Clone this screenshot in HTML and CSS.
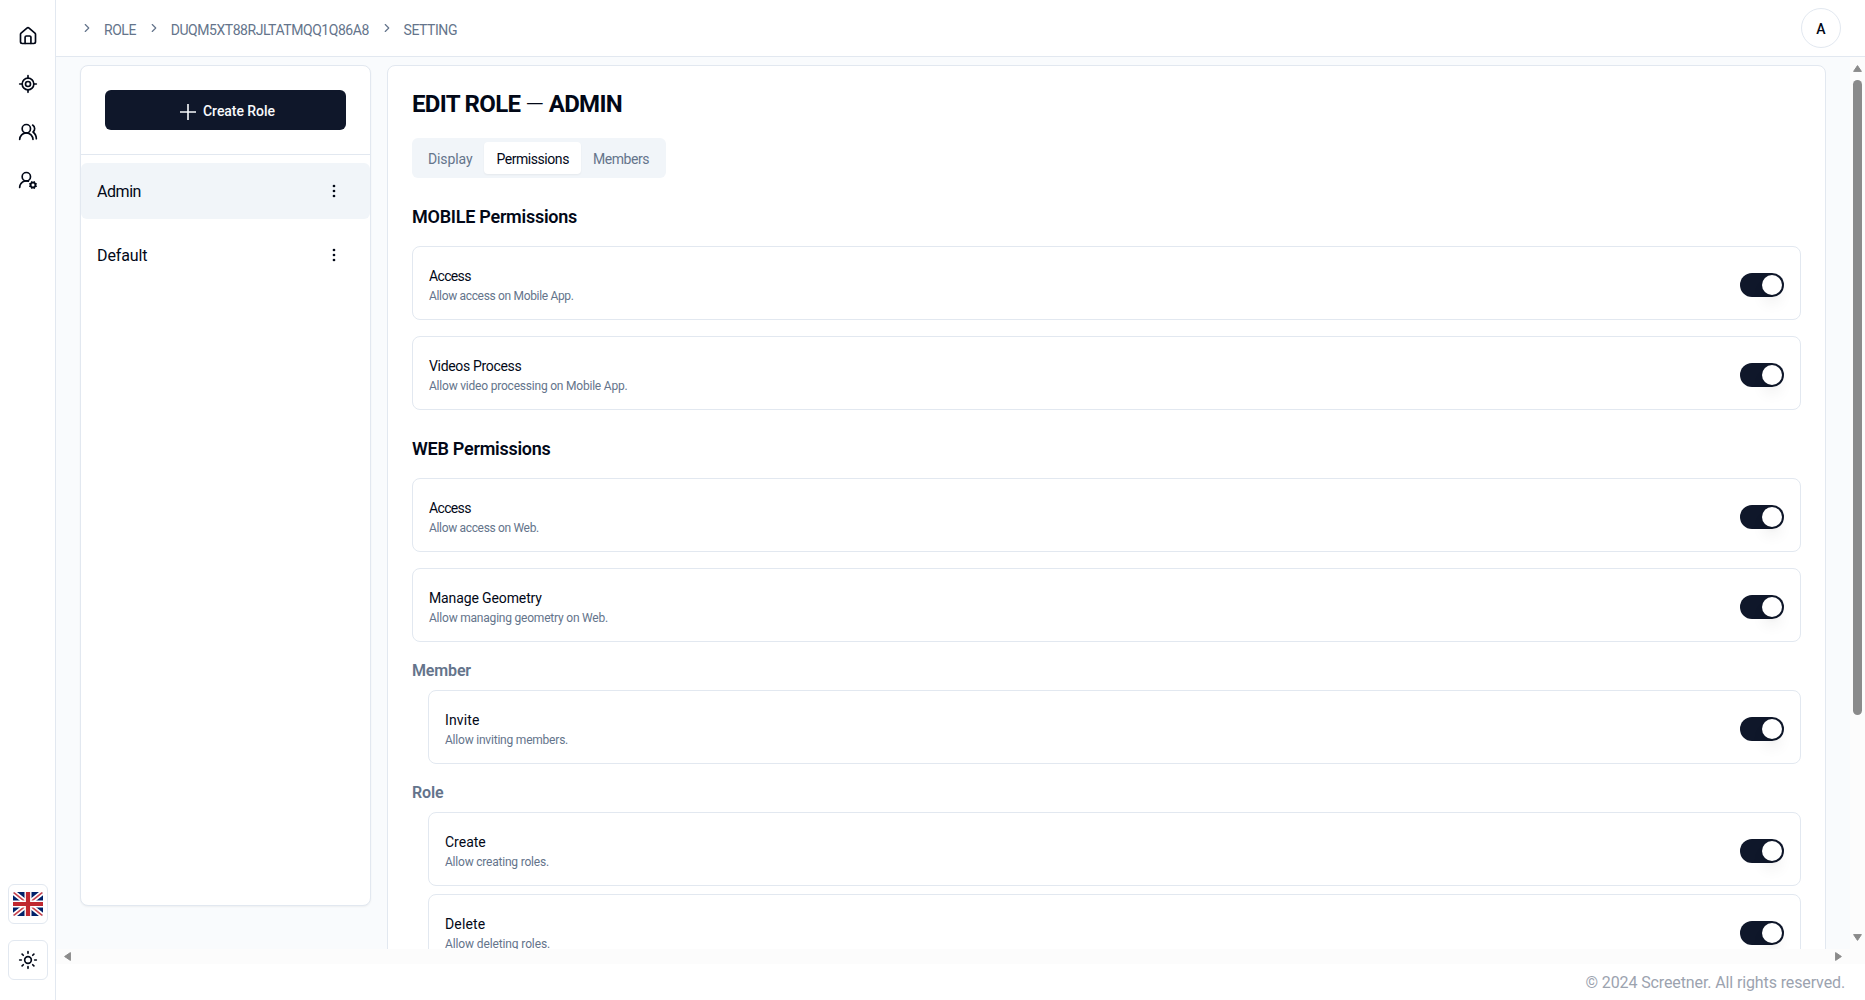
FILE: index.html
```html
<!DOCTYPE html>
<html lang="en">
<head>
<meta charset="utf-8">
<title>Edit Role</title>
<link rel="stylesheet" href="styles.css">
</head>
<body>
<aside class="rail">
  <nav class="rail-nav">
    <svg class="icon" viewBox="0 0 24 24"><path d="M3 10a2 2 0 0 1 .7-1.5l7-6a2 2 0 0 1 2.600 0l7 6A2 2 0 0 1 21 10v9a2 2 0 0 1-2 2H5a2 2 0 0 1-2-2z"/><path d="M8.500 21v-7.500a1.500 1.500 0 0 1 1.500-1.500h4a1.500 1.500 0 0 1 1.500 1.500V21"/></svg>
    <svg class="icon" viewBox="0 0 24 24"><path d="M2 12h3M19 12h3M12 2v3M12 19v3"/><circle cx="12" cy="12" r="7"/><circle cx="12" cy="12" r="3"/></svg>
    <svg class="icon" viewBox="0 0 24 24"><path d="M18 21a8 8 0 0 0-16 0"/><circle cx="10" cy="8" r="5"/><path d="M22 20c0-3.370-2-6.500-4-8a5 5 0 0 0-.45-8.300"/></svg>
    <svg class="icon" viewBox="0 0 24 24"><path d="M2 21a8 8 0 0 1 10.434-7.620"/><circle cx="10" cy="8" r="5"/><circle cx="18" cy="18" r="3"/><path d="m19.500 14.300-.4.900M16.900 20.800l-.3.900M21.700 19.400l-.9-.3M15.200 16.900l-.9-.3M21.700 16.500l-.9.400M15.200 19.100l-.9.400M19.500 21.700l-.4-.9M16.900 15.200l-.4-.9"/></svg>
  </nav>
  <div class="rail-tools">
    <button class="tool"><svg class="flag" viewBox="0 0 30 24"><rect width="30" height="24" rx="1.500" fill="#012169"/><path d="M0 0l30 24M30 0L0 24" stroke="#fff" stroke-width="5"/><path d="M0 0l30 24M30 0L0 24" stroke="#c8444e" stroke-width="1.700"/><path d="M15 0v24M0 12h30" stroke="#fff" stroke-width="7"/><path d="M15 0v24M0 12h30" stroke="#c0272f" stroke-width="4.200"/></svg></button>
    <button class="tool"><svg class="icon" viewBox="0 0 24 24"><circle cx="12" cy="12" r="4"/><path d="M12 2v2M12 20v2M4.930 4.930l1.410 1.410M17.660 17.660l1.410 1.410M2 12h2M20 12h2M6.340 17.660l-1.410 1.410M19.070 4.930l-1.410 1.410"/></svg></button>
  </div>
</aside>
<div class="page">
  <header class="topbar">
    <div class="crumbs">
      <svg class="chevron" viewBox="0 0 24 24"><path d="m9 18 6-6-6-6"/></svg><span>ROLE</span>
      <svg class="chevron" viewBox="0 0 24 24"><path d="m9 18 6-6-6-6"/></svg><span>DUQM5XT88RJLTATMQQ1Q86A8</span>
      <svg class="chevron" viewBox="0 0 24 24"><path d="m9 18 6-6-6-6"/></svg><span>SETTING</span>
    </div>
    <div class="avatar">A</div>
  </header>
  <div class="scroller">
    <main class="content">
      <section class="roles">
        <div class="roles-head"><button class="create"><svg class="plus" viewBox="0 0 16 16"><path d="M8 0v16M0 8h16"/></svg><span>Create Role</span></button></div>
        <div class="roles-list">
          <div class="role active"><span class="tight-4">Admin</span><svg class="dots" viewBox="0 0 4 14"><circle cx="2" cy="2" r="1.350"/><circle cx="2" cy="7" r="1.350"/><circle cx="2" cy="12" r="1.350"/></svg></div>
          <div class="role"><span class="tight-1">Default</span><svg class="dots" viewBox="0 0 4 14"><circle cx="2" cy="2" r="1.350"/><circle cx="2" cy="7" r="1.350"/><circle cx="2" cy="12" r="1.350"/></svg></div>
        </div>
      </section>
      <section class="editor">
        <h1>EDIT ROLE <span class="dash">—</span> ADMIN</h1>
        <div class="tabs"><span class="tab tight-1">Display</span><span class="tab on tight-4">Permissions</span><span class="tab tight-4">Members</span></div>
        <h2>MOBILE Permissions</h2>
        <div class="perms">
          <div class="perm"><div><p class="name tight-5">Access</p><p class="desc tight-3">Allow access on Mobile App.</p></div><i class="switch"></i></div>
          <div class="perm"><div><p class="name tight-3">Videos Process</p><p class="desc tight-2">Allow video processing on Mobile App.</p></div><i class="switch"></i></div>
        </div>
        <h2>WEB Permissions</h2>
        <div class="perms">
          <div class="perm"><div><p class="name tight-5">Access</p><p class="desc tight-3">Allow access on Web.</p></div><i class="switch"></i></div>
          <div class="perm"><div><p class="name tight-1">Manage Geometry</p><p class="desc tight-2">Allow managing geometry on Web.</p></div><i class="switch"></i></div>
        </div>
        <h3>Member</h3>
        <div class="perms nested">
          <div class="perm"><div><p class="name wide">Invite</p><p class="desc tight-2">Allow inviting members.</p></div><i class="switch"></i></div>
        </div>
        <h3>Role</h3>
        <div class="perms nested">
          <div class="perm"><div><p class="name">Create</p><p class="desc tight-2">Allow creating roles.</p></div><i class="switch"></i></div>
          <div class="perm"><div><p class="name wide">Delete</p><p class="desc tight-1">Allow deleting roles.</p></div><i class="switch"></i></div>
        </div>
      </section>
    </main>
    <div class="vbar"><svg class="arrow" viewBox="0 0 9 7"><path d="M4.500.6 8.400 6.400H.6z"/></svg><div class="thumb"></div><svg class="arrow" viewBox="0 0 9 7"><path d="M4.500 6.400.6.6h7.800z"/></svg></div>
    <div class="hbar"><svg class="arrow side" viewBox="0 0 7 9"><path d="M.6 4.500 6.400.6v7.800z"/></svg><svg class="arrow side" viewBox="0 0 7 9"><path d="M6.400 4.500.6.6v7.800z"/></svg></div>
  </div>
  <footer class="footer">© 2024 Screetner. All rights reserved.</footer>
</div>
</body>
</html>
```

FILE: styles.css
```css
* { box-sizing: border-box; margin: 0; }
body { display: flex; height: 1000px; overflow: hidden; background: #fff; color: #020817; font-family: Roboto, "Noto Sans", sans-serif; font-size: 14px; line-height: 20px; }
button { font: inherit; padding: 0; }
svg { display: block; flex: none; }
h1, h2, h3 { font-weight: 600; }
.tight-1 { letter-spacing: -.12px; }
.tight-2 { letter-spacing: -.21px; }
.tight-3 { letter-spacing: -.33px; }
.tight-4 { letter-spacing: -.44px; }
.tight-5 { letter-spacing: -.65px; }
.wide { letter-spacing: .15px; }
.rail { width: 56px; flex: none; display: flex; flex-direction: column; justify-content: space-between; align-items: center; border-right: 1px solid #e2e8f0; padding: 26px 0 20px 1px; }
.rail-nav { display: flex; flex-direction: column; gap: 28px; }
.rail-tools { display: flex; flex-direction: column; gap: 16px; }
.icon { width: 20px; height: 20px; fill: none; stroke: #020817; stroke-width: 2; stroke-linecap: round; stroke-linejoin: round; }
.tool { width: 40px; height: 40px; display: flex; align-items: center; justify-content: center; background: #fff; border: 1px solid #e2e8f0; border-radius: 6px; }
.tool .icon { margin-right: 1px; }
.flag { width: 30px; height: 24px; border-radius: 2px; }
.page { flex: 1; min-width: 0; display: flex; flex-direction: column; }
.topbar { height: 57px; flex: none; display: flex; align-items: center; justify-content: space-between; border-bottom: 1px solid #e2e8f0; padding: 0 24px; }
.crumbs { display: flex; align-items: center; color: #64748b; padding-top: 3px; letter-spacing: -.45px; }
.chevron { width: 14px; height: 14px; margin: -4px 10px 0 0; fill: none; stroke: #64748b; stroke-width: 2; stroke-linecap: round; stroke-linejoin: round; }
.crumbs span + .chevron { margin-left: 10.700px; }
.avatar { width: 40px; height: 40px; border: 1px solid #e2e8f0; border-radius: 50%; display: flex; align-items: center; justify-content: center; font-weight: 500; padding-top: 2px; }
.scroller { height: 907px; flex: none; display: grid; grid-template: 892px 15px / 1fr 15px; }
.content { display: flex; gap: 16px; align-items: flex-start; padding: 8px 24px 0; background: #f9fbfd; overflow: hidden; }
.roles { width: 291px; height: 841px; flex: none; background: #fff; border: 1px solid #e2e8f0; border-radius: 8px; box-shadow: 0 1px 2px rgba(0,0,0,.05); }
.roles-head { padding: 24px; border-bottom: 1px solid #e2e8f0; }
.create { width: 100%; height: 40px; display: flex; align-items: center; justify-content: center; gap: 7px; padding-left: 4px; border: 0; border-radius: 6px; background: #0f172a; color: #f8fafc; font-weight: 500; }
.create span { padding-top: 2px; letter-spacing: -.05px; }
.plus { width: 16px; height: 16px; stroke: #f8fafc; stroke-width: 1.6; margin-top: 3px; }
.roles-list { display: flex; flex-direction: column; gap: 8px; padding-top: 8px; }
.role { height: 56px; display: flex; align-items: center; justify-content: space-between; padding: 0 34px 0 16px; border-radius: 6px; font-size: 16px; }
.role span { padding-top: 2px; }
.role.active { background: #f1f5f9; }
.dots { width: 4px; height: 14px; fill: #020817; }
.editor { flex: 1; height: 1200px; background: #fff; border: 1px solid #e2e8f0; border-radius: 8px; padding: 24px; }
h1 { font-size: 24px; font-weight: 700; line-height: 28px; margin-bottom: 20px; letter-spacing: -.68px; }
.dash { font-weight: 300; }
.tabs { width: 254px; height: 40px; display: flex; padding: 4px; background: #f1f5f9; border-radius: 6px; color: #64748b; font-weight: 450; }
.tab { padding: 7px 12px 5px; border-radius: 4px; }
.tab.on { background: #fff; color: #020817; box-shadow: 0 1px 2px rgba(0,0,0,.05); }
h2 { font-size: 18px; line-height: 26px; padding-top: 2px; margin: 24px 0 16px; letter-spacing: -.26px; }
.perms { display: flex; flex-direction: column; gap: 16px; }
.perm { height: 74px; display: flex; align-items: center; justify-content: space-between; padding: 6px 16px 0; border: 1px solid #e2e8f0; border-radius: 8px; }
.name { font-weight: 450; }
.desc { font-size: 12px; color: #64748b; }
.switch { width: 44px; height: 24px; margin-top: -2px; border-radius: 12px; background: #0f172a; padding: 2px; display: flex; justify-content: flex-end; }
.switch::after { content: ""; width: 20px; height: 20px; border-radius: 50%; background: #fff; box-shadow: 0 10px 15px -3px rgba(0,0,0,.1), 0 4px 6px -4px rgba(0,0,0,.1); }
h3 { font-size: 16px; line-height: 22px; padding-top: 2px; color: #64748b; margin: 16px 0 8px; letter-spacing: -.15px; }
.nested { gap: 8px; padding-left: 16px; }
.vbar { display: flex; flex-direction: column; align-items: center; padding: 8px 0; background: #fcfcfc; }
.arrow { width: 9px; height: 7px; fill: #8b8b8b; stroke: #8b8b8b; stroke-linejoin: round; }
.arrow.side { width: 7px; height: 9px; }
.thumb { width: 9px; height: 635px; margin: 8px 0 auto; border-radius: 5px; background: #8b8b8b; }
.hbar { grid-column: 1 / 3; display: flex; align-items: center; justify-content: space-between; padding: 0 23px 0 8px; background: #fcfcfc; }
.footer { display: flex; justify-content: flex-end; padding: 7px 20px 0 0; font-size: 16px; line-height: 24px; color: #9ca3af; letter-spacing: -.12px; }
```
